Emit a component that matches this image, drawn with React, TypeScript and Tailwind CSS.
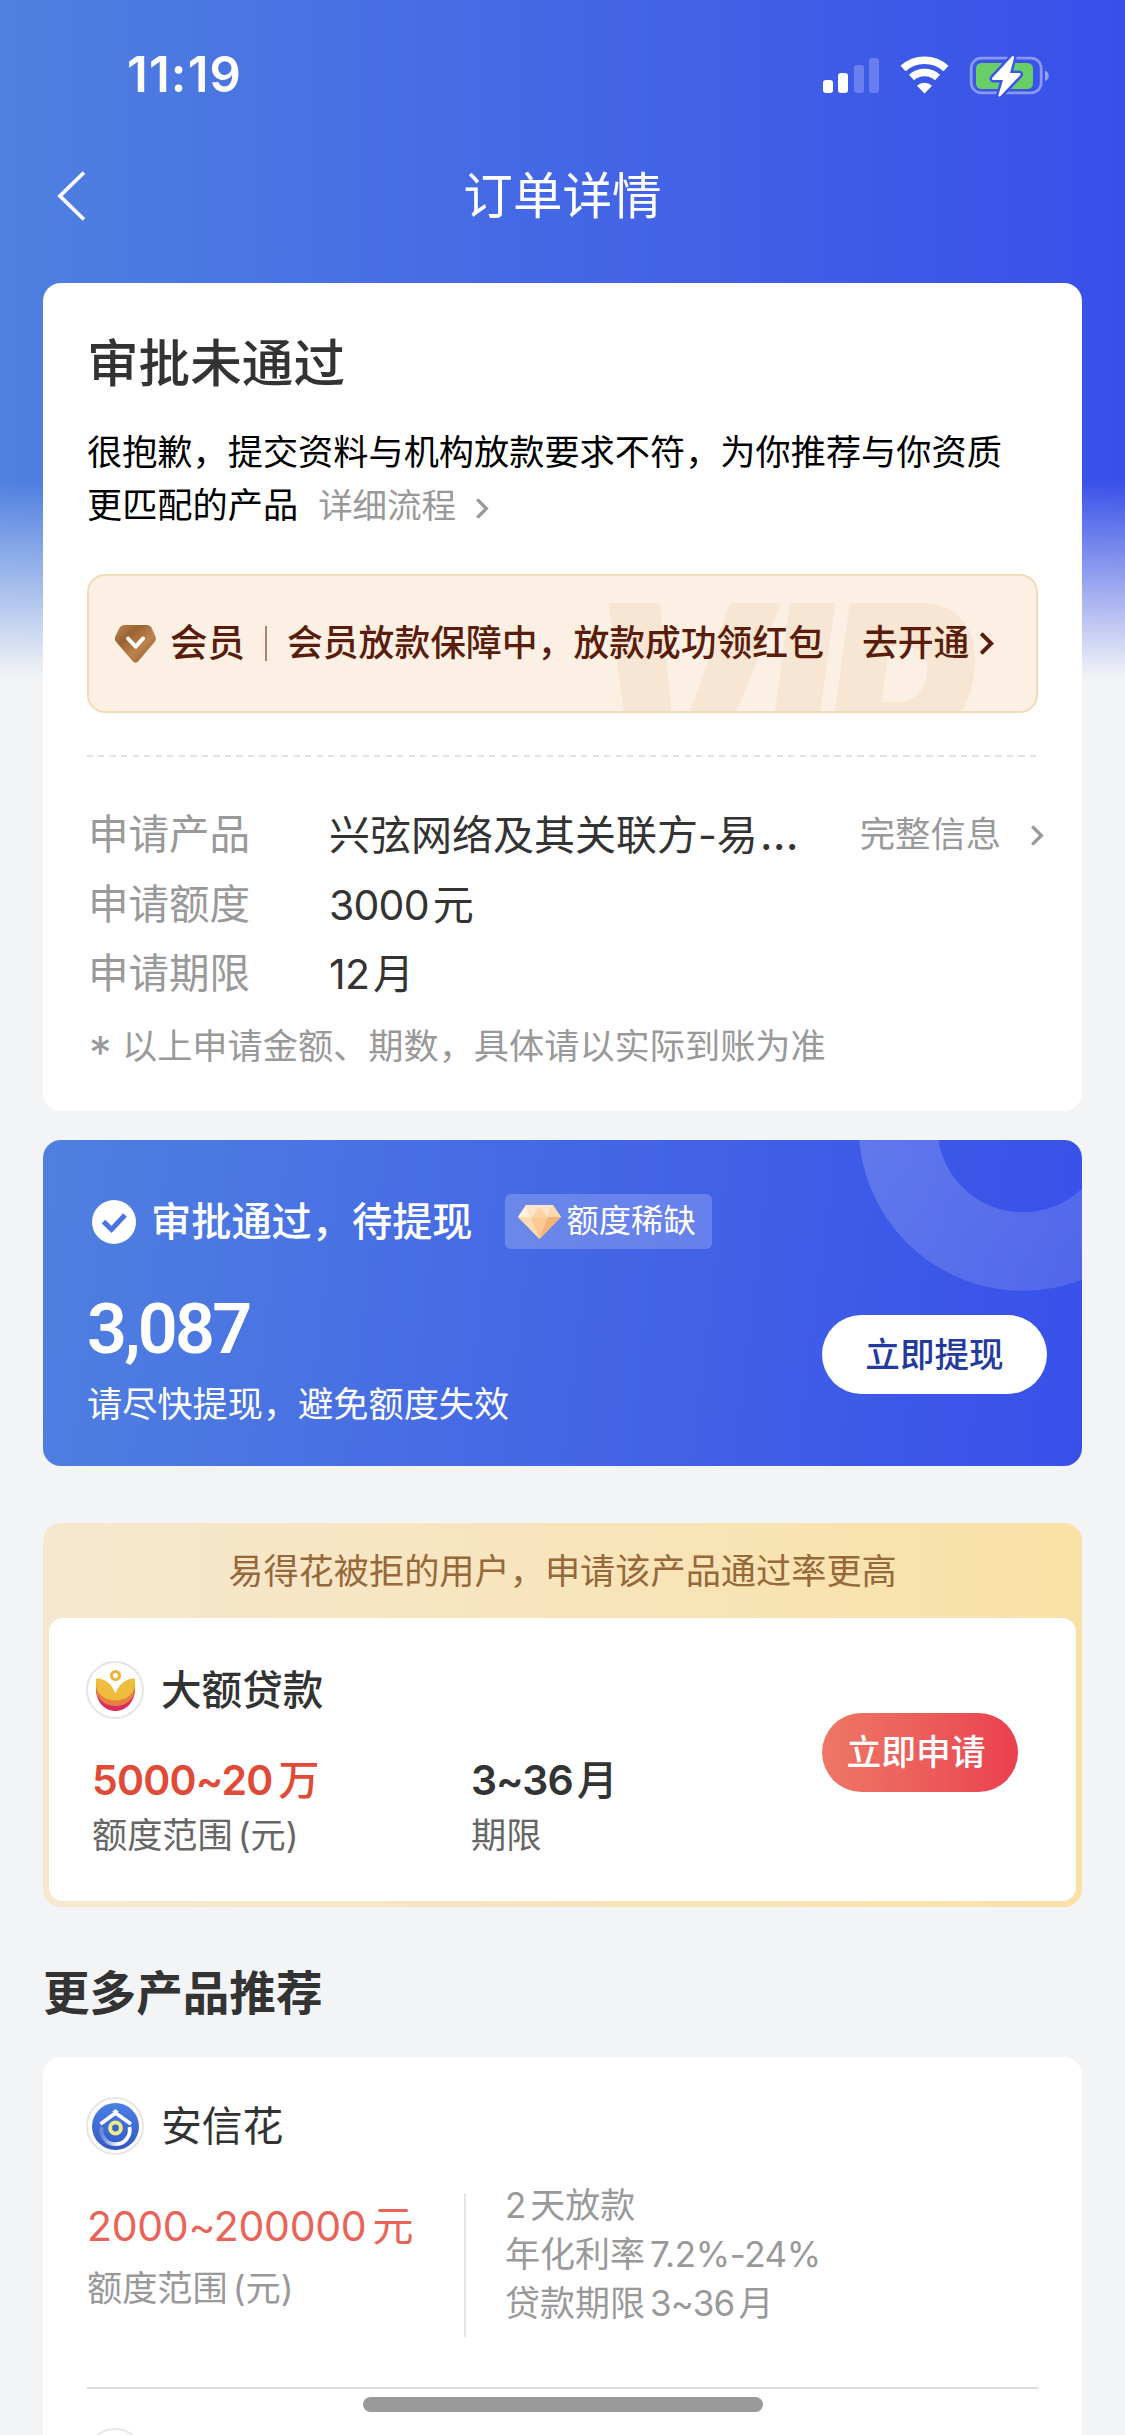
import type { ReactNode } from "react";

const DETAIL_ROWS = [
  { label: "申请产品", value: "兴弦网络及其关联方-易", unit: "", more: true },
  { label: "申请额度", value: "3000", unit: "元", more: false },
  { label: "申请期限", value: "12", unit: "月", more: false },
];

const Chevron = ({ className, width = 3.5 }: { className: string; width?: number }) => (
  <svg className={className} viewBox="0 0 14 22" fill="none" stroke="currentColor" strokeWidth={width}>
    <path d="M2 1.5 11.5 11 2 20.5" />
  </svg>
);

const StatusIcons = () => (
  <svg className="h-[44px] w-[230px]" viewBox="0 0 230 44">
    <g fill="#fff">
      <rect x="3" y="27" width="10" height="13" rx="3" />
      <rect x="18" y="20" width="10" height="20" rx="3" />
      <rect x="34" y="12" width="10" height="28" rx="3" opacity=".22" />
      <rect x="49" y="5" width="10" height="35" rx="3" opacity=".22" />
    </g>
    <g fill="none" stroke="#fff" strokeWidth="7.5">
      <path d="M83 15.5a32 32 0 0 1 43 0" />
      <path d="M91.5 24.5a19.500 19.500 0 0 1 26 0" />
    </g>
    <path d="M104.500 40.500 97 32.800a11 11 0 0 1 15 0z" fill="#fff" />
    <rect x="151.200" y="5.200" width="70" height="34.600" rx="10" fill="none" stroke="#fff" strokeOpacity=".4" strokeWidth="2.800" />
    <path d="M225 17.500c5 1.500 5 9 0 10.500z" fill="#fff" opacity=".45" />
    <rect x="156" y="10" width="57" height="26" rx="5.500" fill="#68ce67" />
    <path
      d="M192 3.500 172.500 24.500c-1 1.200-.5 2.500 1 2.500h9.500l-4.500 15 c-.4 1.500 1 2 2 1L200 22.500c1-1.200.4-2.500-1-2.500h-9l4-15c.3-1.500-1-2.500-2-1.500z"
      fill="#fff"
      stroke="#3b56e8"
      strokeWidth="5"
      paintOrder="stroke"
    />
  </svg>
);

const VipGem = () => (
  <svg className="h-[38px] w-[41px]" viewBox="0 0 41 38">
    <defs>
      <linearGradient id="gem" x1="0" y1="0" x2="1" y2="1">
        <stop offset="0" stopColor="#c58c55" />
        <stop offset=".3" stopColor="#9a6231" />
        <stop offset=".6" stopColor="#bd834c" />
        <stop offset="1" stopColor="#8d5528" />
      </linearGradient>
    </defs>
    <path d="M9 0h23q3 0 4.500 2.500L40 10.500q2 3.500-.5 6.500L23.500 36q-3 3.500-6 0L1.200 17q-2.400-3-.5-6.500l4-8Q6 0 9 0z" fill="url(#gem)" />
    <path d="m13 13.500 7.700 8.200 7.300-8.200" fill="none" stroke="#fff" strokeWidth="4" strokeLinecap="round" strokeLinejoin="round" />
  </svg>
);

const Diamond = () => (
  <svg className="h-[34px] w-[43px]" viewBox="0 0 43 34">
    <path d="M8 0h27l8 12-21.500 22L0 12z" fill="#fbc792" />
    <path d="M8 0h27l-6 12H14z" fill="#fde5c8" />
    <path d="m21.500 2 8.500 11H13z" fill="#fbd3a4" />
    <path d="M8 0 0 12h13z" fill="#fff0dc" />
    <path d="m35 0 8 12H30z" fill="#fcd9b0" />
    <path d="M0 12h13l8.500 22z" fill="#fddab2" />
    <path d="M43 12H30l-8.500 22z" fill="#f6b377" />
  </svg>
);

const LotusLogo = () => (
  <svg className="h-[41px] w-[39px]" viewBox="0 0 39 41">
    <path d="M0 19c0 13 9 22 19.500 22S39 32 39 19l-19.500 6z" fill="#de2a62" />
    <path d="M0 14v5c0 10 9 17 19.500 17S39 29 39 19v-5l-19.500 10z" fill="#e5803f" />
    <path d="M0 8.500c8-.5 16 5 19.500 15C23 13.500 31 8 39 8.500V14c0 10-9 16.500-19.500 16.500S0 24 0 14z" fill="#efbc3d" />
    <circle cx="19.500" cy="5.500" r="4" fill="#fff" stroke="#efb23a" strokeWidth="3" />
  </svg>
);

const HouseLogo = () => (
  <svg className="size-[47px]" viewBox="0 0 47 47">
    <defs>
      <linearGradient id="house" x1="0" y1="0" x2="0" y2="1">
        <stop offset="0" stopColor="#4a7fe6" />
        <stop offset="1" stopColor="#3358c4" />
      </linearGradient>
      <linearGradient id="arc" x1="0" y1="0" x2="1" y2="0">
        <stop offset="0" stopColor="#fff" stopOpacity=".2" />
        <stop offset=".6" stopColor="#fff" />
      </linearGradient>
    </defs>
    <circle cx="23.500" cy="23.500" r="23.500" fill="url(#house)" />
    <path d="M8.500 21 23.500 10 39 21" fill="none" stroke="#fff" strokeWidth="3.800" />
    <path d="m20 9 3.500-3L27 9z" fill="#fff" />
    <path d="M9.500 24a14.300 14.300 0 1 0 28 0" fill="none" stroke="url(#arc)" strokeWidth="3.800" />
    <circle cx="23.500" cy="25" r="5.400" fill="#3b63c8" stroke="#efe98e" strokeWidth="4" />
  </svg>
);

const LogoRing = ({ children }: { children?: ReactNode }) => (
  <span className="-ml-px flex size-[58px] shrink-0 items-center justify-center rounded-full border-2 border-[#e6e6e6] bg-white">
    {children}
  </span>
);

export default function App() {
  return (
    <div className="relative h-[2435px] w-[1125px] overflow-hidden bg-[#f2f4f6] font-[Inter,'Noto_Sans_CJK_SC',sans-serif] text-[#333]">
      <div className="absolute inset-x-0 top-0 h-[678px] bg-[linear-gradient(to_bottom,rgba(242,244,246,0)_71%,#f2f4f6_100%),linear-gradient(to_right,#4f80e0,#4467e5_50%,#3850e9)]" />

      <div className="relative">
        <div className="flex h-[150px] items-center justify-between pl-[127px] pr-[75px]">
          <span className="text-[49px] font-semibold tracking-[1.2px] text-white">11:19</span>
          <StatusIcons />
        </div>
        <div className="relative flex h-[90px] items-center justify-center text-white">
          <svg className="absolute left-[57px] top-[21px] h-[50px] w-[30px]" viewBox="0 0 30 50" fill="none" stroke="#fff" strokeWidth="3.800">
            <path d="M27 1.500 3 25l24 23.500" />
          </svg>
          <h1 className="pt-[2px] text-[49.600px] leading-[60px]">订单详情</h1>
        </div>

        <main className="px-[43px] pt-[43px]">
          {/* 审批结果 */}
          <section className="h-[828px] rounded-[18px] bg-white px-[44px] pt-[48px]">
            <h2 className="text-[51.6px] font-medium leading-[64px]">审批未通过</h2>
            <p className="mt-[31px] whitespace-nowrap text-[35.2px] leading-[53px] text-black">
              很抱歉，提交资料与机构放款要求不符，为你推荐与你资质
              <br />
              更匹配的产品
              <span className="ml-[20px] text-[34.500px] text-[#999]">详细流程</span>
              <Chevron className="ml-[19px] inline-block h-[21px] w-[14px] align-[-1px] text-[#999]" />
            </p>

            <div className="relative mt-[42px] flex h-[139px] items-center overflow-hidden rounded-[18px] border-2 border-[#f1dcb8] bg-[#fcf0e4] pl-[26px] text-[35.8px] font-medium text-[#5a1d0c]">
              <span className="absolute left-[497px] top-[12px] scale-y-120 text-[230px] font-black italic leading-[230px] tracking-[-7px] text-[#f7e6d4]">VIP</span>
              <div className="relative flex items-center whitespace-nowrap">
                <VipGem />
                <span className="ml-[14px] text-[37.500px]">会员</span>
                <span className="ml-[20px] h-[35px] w-[2px] bg-[#a98374]" />
                <span className="ml-[20px]">会员放款保障中，放款成功领红包</span>
                <span className="ml-[38px]">去开通</span>
                <Chevron className="ml-[10px] h-[23px] w-[15px]" width={3.800} />
              </div>
            </div>

            <div className="mt-[42px] h-[2px] bg-[repeating-linear-gradient(90deg,#e2e2e2_0_6px,transparent_6px_11.5px)]" />

            <dl className="mt-[44px]">
              {DETAIL_ROWS.map((row) => (
                <div key={row.label} className="flex h-[69.5px] items-center whitespace-nowrap text-[41px]">
                  <dt className="w-[242px] pl-[1px] text-[40.500px] text-[#999]">{row.label}</dt>
                  {row.more ? (
                    <dd>
                      {row.value}
                      <span className="ml-[2px] text-[45px] leading-[41px]">…</span>
                    </dd>
                  ) : (
                    <dd>
                      <span className="tracking-[-0.8px]">{row.value}</span>
                      <span className="ml-[4px]">{row.unit}</span>
                    </dd>
                  )}
                  {row.more && (
                    <dd className="ml-auto mr-[-6px] flex items-center text-[35.3px] text-[#999]">
                      完整信息
                      <Chevron className="ml-[29px] h-[21px] w-[14px]" />
                    </dd>
                  )}
                </div>
              ))}
            </dl>
            <p className="mt-[10px] flex whitespace-nowrap text-[35.2px] leading-[52px] text-[#999]">
              <span className="w-[35px] pl-[2px] text-[45px] leading-[66px]">*</span>以上申请金额、期数，具体请以实际到账为准
            </p>
          </section>

          {/* 待提现 */}
          <section className="relative mt-[29px] h-[326px] overflow-hidden rounded-[18px] bg-[linear-gradient(97deg,#4f80e0,#4467e5_50%,#3850e9)] text-white">
            <svg className="absolute right-0 top-0 h-[160px] w-[240px]" viewBox="0 0 240 160">
              <defs>
                <linearGradient id="ring" x1="0" y1="0" x2="1" y2="1">
                  <stop offset="0.2" stopColor="#fff" stopOpacity=".18" />
                  <stop offset="1" stopColor="#fff" stopOpacity=".12" />
                </linearGradient>
              </defs>
              <circle cx="181" cy="-13.500" r="125" fill="none" stroke="url(#ring)" strokeWidth="78.500" />
            </svg>
            <div className="relative flex items-center pl-[49px] pt-[54px]">
              <svg className="size-[44px]" viewBox="0 0 44 44">
                <circle cx="22" cy="22" r="22" fill="#fff" />
                <path d="m11.500 21.500 8 8L33 15" fill="none" stroke="#4875e2" strokeWidth="5" />
              </svg>
              <span className="ml-[15px] whitespace-nowrap text-[40.2px] font-medium leading-[55px]">审批通过，待提现</span>
              <span className="ml-[32px] flex h-[55px] w-[207px] items-center whitespace-nowrap rounded-[6px] bg-white/20 pl-[13px] text-[32.300px]">
                <Diamond />
                <span className="ml-[6px]">额度稀缺</span>
              </span>
            </div>
            <div className="relative flex items-start justify-between pl-[44px] pr-[35px]">
              <div>
                <div className="mt-[40px] font-[Roboto,sans-serif] text-[70px] font-semibold leading-[80px] tracking-[-2.8px]">3,087</div>
                <p className="mt-[8px] text-[35.2px] leading-[54px]">请尽快提现，避免额度失效</p>
              </div>
              <button className="mt-[66px] h-[79px] w-[225px] rounded-full bg-white text-[34.600px] font-medium text-[#243a9e]">立即提现</button>
            </div>
          </section>

          {/* 高通过率产品 */}
          <section className="mt-[57px] h-[384px] rounded-[18px] bg-linear-to-r from-[#f6e8d0] to-[#f9e1a6] px-[6px]">
            <p className="h-[95px] text-center text-[35.2px] leading-[97px] text-[#96683a]">易得花被拒的用户，申请该产品通过率更高</p>
            <div className="flex h-[283px] justify-between rounded-[14px] bg-white pl-[38px] pr-[58px]">
              <div>
                <div className="mt-[43px] flex items-center">
                  <LogoRing>
                    <LotusLogo />
                  </LogoRing>
                  <span className="ml-[17px] pt-[2px] text-[40.600px] font-medium leading-[56px]">大额贷款</span>
                </div>
                <div className="mt-[32px] flex whitespace-nowrap pl-[5px]">
                  <div className="w-[379px]">
                    <div className="text-[41px] font-semibold leading-[58px] tracking-[-0.8px] text-[#e04a37]">
                      5000~20<span className="ml-[6px] font-medium">万</span>
                    </div>
                    <div className="pt-[1px] text-[35.2px] leading-[50px] text-[#666]">
                      额度范围<span className="ml-[5px]">(元)</span>
                    </div>
                  </div>
                  <div>
                    <div className="text-[41px] font-semibold leading-[58px] tracking-[-1px]">
                      3~36<span className="ml-[4px] font-medium">月</span>
                    </div>
                    <div className="pt-[1px] text-[35.2px] leading-[50px] text-[#666]">期限</div>
                  </div>
                </div>
              </div>
              <button className="mt-[95px] h-[79px] w-[196px] rounded-full bg-linear-to-r from-[#ee7766] to-[#ea3f4f] pr-[8px] text-[34.800px] font-medium text-white">
                立即申请
              </button>
            </div>
          </section>

          <h2 className="mt-[57px] text-[46.600px] font-bold leading-[58px]">更多产品推荐</h2>

          {/* 推荐列表 */}
          <section className="mt-[35px] rounded-t-[18px] bg-white px-[44px] pb-[60px] pt-[40px]">
            <div className="flex items-center">
              <LogoRing>
                <HouseLogo />
              </LogoRing>
              <span className="ml-[17px] text-[40.800px] leading-[58px]">安信花</span>
            </div>
            <div className="mt-[26px] flex h-[208px] whitespace-nowrap text-[35px] text-[#999]">
              <div className="w-[377px] pt-[16px]">
                <div className="text-[41px] leading-[58px] tracking-[-0.3px] text-[#e96359]">
                  2000~200000<span className="ml-[6px]">元</span>
                </div>
                <div className="mt-[6px] text-[35.2px] leading-[54px]">
                  额度范围<span className="ml-[5px]">(元)</span>
                </div>
              </div>
              <div className="mt-[12px] h-[144px] w-[2px] bg-[#e6e6e6]" />
              <div className="pl-[39px] leading-[49px]">
                <div>2<span className="ml-[4px]">天放款</span></div>
                <div>年化利率<span className="ml-[5px] tracking-[-0.4px]">7.2%-24%</span></div>
                <div>贷款期限<span className="ml-[5px] tracking-[-0.8px]">3~36</span><span className="ml-[4px]">月</span></div>
              </div>
            </div>
            <div className="-mt-[2px] h-[2px] bg-[#ddd]" />
            <div className="mt-[39px]">
              <LogoRing />
            </div>
          </section>
        </main>
      </div>

      <div className="absolute left-[363px] top-[2397px] h-[15px] w-[400px] rounded-full bg-[#9a9a9a]" />
    </div>
  );
}
